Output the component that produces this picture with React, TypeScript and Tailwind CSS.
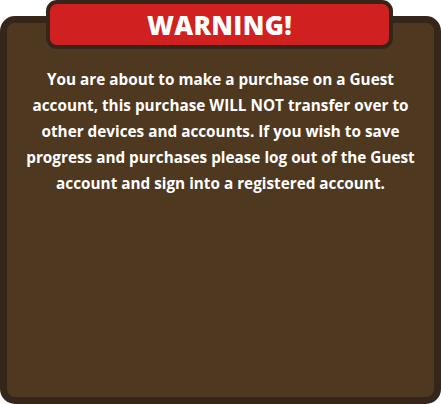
const lines = [
  'You are about to make a purchase on a Guest',
  'account, this purchase WILL NOT transfer over to',
  'other devices and accounts. If you wish to save',
  'progress and purchases please log out of the Guest',
  'account and sign into a registered account.',
]

export default function App() {
  return (
    <div className="h-[404px] w-[441px] overflow-hidden bg-white" style={{ fontFamily: '"Open Sans", "Noto Sans", sans-serif' }}>
      <div className="relative z-10 ml-[46px] flex h-[49px] w-[347px] items-center justify-center rounded-[11px] border-4 border-[#36261a] bg-[#d02020]">
        <span className="text-[26px] font-extrabold leading-none tracking-[0.3px] text-white">WARNING!</span>
      </div>
      <div className="-mt-[33px] h-[388px] w-[441px] rounded-[15px] border-[7px] border-[#36261a] bg-[#4f3820] px-[4px] pt-[43px]">
        <p className="text-center text-[15.3px] font-bold leading-[26px] text-white">
          {lines.map((line) => (
            <span key={line} className="block whitespace-nowrap">
              {line}
            </span>
          ))}
        </p>
      </div>
    </div>
  )
}
